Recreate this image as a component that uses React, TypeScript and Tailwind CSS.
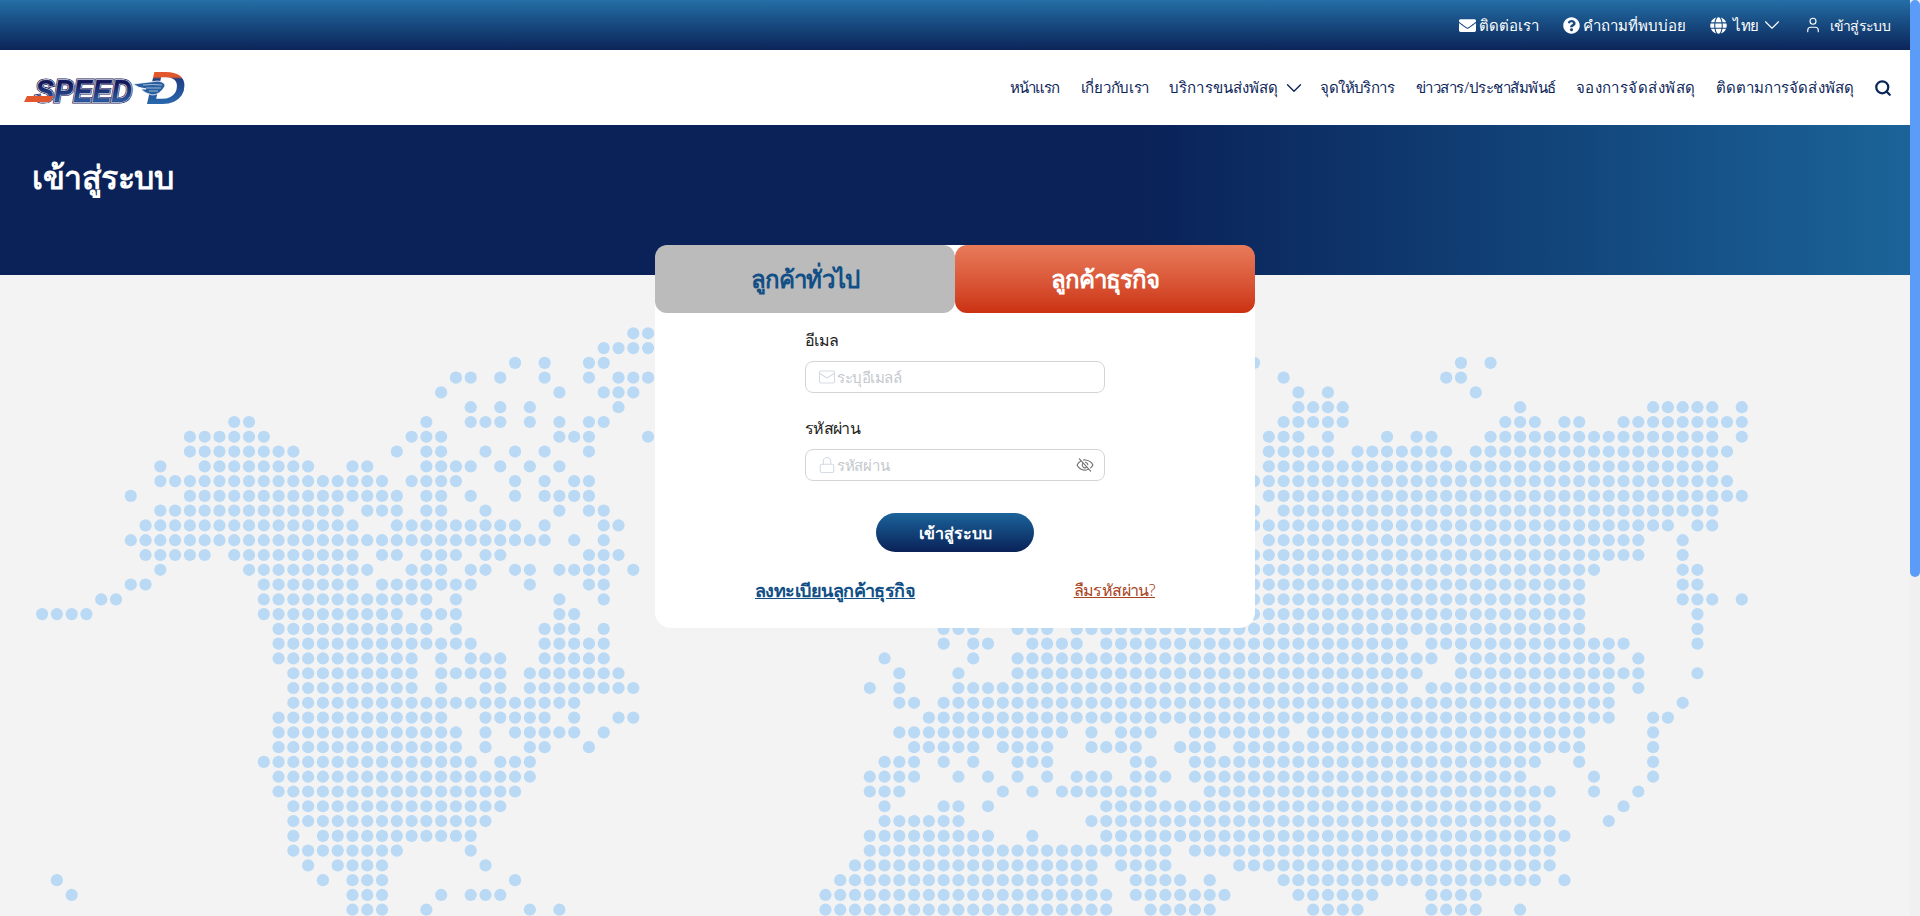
import { ChevronDown, Lock, Mail, Search, User } from "lucide-react";
import { FaEnvelope, FaGlobe, FaQuestionCircle } from "react-icons/fa";
import { PiEyeSlash } from "react-icons/pi";

// dot map: one entry per row, columns as runs
const MAP_ROWS = [
  "40,41",
  "38-41",
  "32,34,37,38,82,96,98",
  "28,29,31,34,37,39-41,84,95,96",
  "27,35,38-40,85,87,97",
  "29,31,33,39,85-88,100,109-113,115",
  "13,14,26,29-31,33,35,37,38,84-88,99-101,103,104,107-115",
  "10-15,25-27,35-37,41,83-85,87,91,93,94,98-113,115",
  "10-17,24,26,27,30,32,34,37,83-87,89-95,97-114",
  "8,11-18,21,22,26-29,31,33,35,83-113",
  "8-23,25-28,32,34,36,37,82-114",
  "6,10-24,26,27,29,32,34-37,83-115",
  "8-20,22-24,26,27,30,35,37,38,82,84-113",
  "7-21,24-32,34,38,39,82-110,112,113",
  "6-34,36,38,83-108,111",
  "7-11,13-21,23,24,26-28,30,31,37-39,82-108,111",
  "8,14-22,25-27,29,30,32,33,35-38,40,82-105,111,112",
  "6,7,15-21,23-29,33,37,38,82-104,111,112",
  "4,5,15-26,28,35,38,82-104,111-113,115",
  "0-3,15-24,26-28,35,36,82-104,112",
  "16-26,28,34-36,38,61-63,66-68,70-104,112",
  "16-29,34-38,61,63,64,67-70,72-92,94-107,112",
  "16-25,27,29-31,34-38,57,63,66-94,96-106,108",
  "17-25,27-31,33-39,58,62,66-93,96-108,112",
  "17-25,27,30,31,33-40,56,58,62-92,94-106,108",
  "17-36,58,59,61-106,111",
  "16-27,30-34,36,39,40,60-106,109,110",
  "16-28,30,32-36,38,58-69,71,73-75,78-84,86-104,109",
  "16-28,30,33,34,37,59-63,65-68,71-74,77-79,81-104,109",
  "15-29,31-33,57-59,61,63,66-68,74,75,78-101,104,109",
  "16-33,56-59,62,64,66,68,70-72,74-76,78-100,105,109",
  "16-32,56-58,65,67,69-75,79-102,105,108",
  "17-31,57,61,62,64,72-101,107",
  "17-30,57-62,71-102,106",
  "17,19-29,56-64,67,72-103",
  "17-24,29,56-76,78-102",
  "18,20-23,30,55-71,73-76,81-102",
  "1,19,21-23,32,54-71,74-77,79,84-101,103",
  "2,21-23,27,29-31,53-72,74-80,85-90,94-97",
  "21-23,26,33,35,53-72,75-79,86-89,94-97,100",
];

const dots = MAP_ROWS.flatMap((row, r) =>
  row.split(",").flatMap((run) => {
    const [from, to] = run.split("-").map(Number);
    const cols: number[] = [];
    for (let c = from; c <= (to ?? from); c++) cols.push(c);
    return cols.map((c) => ({ x: 42.1 + c * 14.78, y: 58.3 + r * 14.78 }));
  })
);

function Logo() {
  const word = {
    x: 11,
    y: 33,
    fontFamily: "Liberation Sans",
    fontWeight: 700,
    fontStyle: "italic",
    fontSize: 32,
    textLength: 97,
    lengthAdjust: "spacingAndGlyphs" as const,
  };
  return (
    <svg width="170" height="58" viewBox="0 -10 170 58" className="block">
      <defs>
        <linearGradient id="speed" x1="0" y1="0" x2="0" y2="1">
          <stop offset="0.3" stopColor="#15195a" />
          <stop offset="0.8" stopColor="#2a5fa8" />
        </linearGradient>
        <linearGradient id="dee" x1="0" y1="0" x2="0" y2="1">
          <stop offset="0.3" stopColor="#e2582c" />
          <stop offset="0.34" stopColor="#1f3f86" />
          <stop offset="0.85" stopColor="#2a6cb0" />
        </linearGradient>
      </defs>
      <text {...word} stroke="#23235e" strokeWidth="3.2" fill="#23235e">SPEED</text>
      <text {...word} stroke="#fff" strokeWidth="1.5" fill="#fff">SPEED</text>
      <text {...word} stroke="#1b2a6e" strokeWidth="0.5" fill="url(#speed)">SPEED</text>
      <path d="M0 33 L3 27 H29 L26 33 Z" fill="#e2582c" />
      <text x="122" y="35" fontFamily="Liberation Sans" fontWeight="700" fontStyle="italic" fontSize="47" fill="url(#dee)" textLength="40" lengthAdjust="spacingAndGlyphs">D</text>
      <path d="M109 15 L134 12 Q141 13 141 17 Q136 26 128 26 Q120 24 117 20 H122 Q114 19 109 15 Z" fill="#2a5f9e" stroke="#fff" strokeWidth="0.8" />
      <path d="M119 16 Q128 15 138 16 M122 19 Q130 19 137 19 M125 22 Q130 22 134 22" stroke="#cfe0f2" strokeWidth="0.7" fill="none" />
    </svg>
  );
}

const NAV = [
  { label: "หน้าแรก", cls: "mr-[2px] tracking-[-1px]" },
  { label: "เกี่ยวกับเรา", cls: "tracking-[-0.3px]" },
  { label: "บริการขนส่งพัสดุ", cls: "tracking-[0.1px]" },
  { label: "จุดให้บริการ", cls: "mr-[2px] tracking-[-0.6px]" },
  { label: "ข่าวสาร/ประชาสัมพันธ์", cls: "tracking-[-0.5px]" },
  { label: "จองการจัดส่งพัสดุ", cls: "tracking-[0.45px]" },
  { label: "ติดตามการจัดส่งพัสดุ", cls: "tracking-[0.1px]" },
];

export default function App() {
  return (
    <div className="flex h-[916px] overflow-hidden font-['Noto_Sans',sans-serif]">
      <div className="flex min-w-0 flex-1 flex-col">
        {/* Top bar */}
        <div className="flex h-[50px] shrink-0 items-center justify-end bg-gradient-to-b from-[#246fa6] to-[#0c2559] pr-5 text-[15px] font-light text-white">
          <div className="flex items-center gap-[3px]">
            <FaEnvelope className="text-[17px]" />
            <span>ติดต่อเรา</span>
          </div>
          <div className="ml-6 flex items-center gap-[3px]">
            <FaQuestionCircle className="text-[17px]" />
            <span>คำถามที่พบบ่อย</span>
          </div>
          <div className="ml-6 flex items-center">
            <FaGlobe className="text-[17px]" />
            <span className="ml-[6px] tracking-[-0.5px]">ไทย</span>
            <ChevronDown className="-mr-[7px] h-[26px] w-[26px]" strokeWidth={1} />
          </div>
          <div className="ml-[26px] flex items-center gap-2">
            <User className="h-[18px] w-[18px]" strokeWidth={1.5} />
            <span className="text-[14px] tracking-[-0.7px]">เข้าสู่ระบบ</span>
          </div>
        </div>

        {/* Nav */}
        <div className="flex h-[75px] shrink-0 items-center justify-between bg-white pl-6 pr-[18px] text-[15px] font-light text-[#0c2559]">
          <Logo />
          <div className="flex items-center gap-5">
            {NAV.map((item) => (
              <div key={item.label} className="flex items-center gap-[10px]">
                <span className={item.cls}>{item.label}</span>
                {item.label === "บริการขนส่งพัสดุ" && <ChevronDown className="-mx-[7px] h-[26px] w-[26px]" strokeWidth={1.25} />}
              </div>
            ))}
            <Search className="h-[18px] w-[18px]" strokeWidth={3} />
          </div>
        </div>

        {/* Title */}
        <div className="h-[150px] shrink-0 bg-gradient-to-r from-[#0a2258] from-60% to-[#1b6499] px-8 pt-[29px]">
          <h1 className="text-[32px] font-bold leading-[46px] tracking-[-0.5px] text-white">เข้าสู่ระบบ</h1>
        </div>

        {/* Login */}
        <div className="relative flex-1 bg-[#f3f3f3]">
          <svg className="absolute left-0 top-0" width="1910" height="641" viewBox="0 0 1910 641">
            {dots.map((d, i) => (
              <circle key={i} cx={d.x} cy={d.y} r="6.1" fill="#b9d9f5" />
            ))}
          </svg>

          <div className="relative z-10 mx-auto -mt-[30px] w-[600px] rounded-2xl bg-white">
            <div className="grid h-[68px] grid-cols-2 text-2xl font-bold tracking-[-0.9px]">
              <div className="flex items-center justify-center rounded-xl bg-[#bbbbbb] text-[#114f86]">ลูกค้าทั่วไป</div>
              <div className="flex items-center justify-center rounded-xl bg-gradient-to-b from-[#e87b5a] to-[#cb300f] text-white">ลูกค้าธุรกิจ</div>
            </div>

            <div className="mx-auto w-[300px] pt-[15px] text-base font-light text-[#222222]">
              <label className="block leading-6 tracking-[-0.7px]">อีเมล</label>
              <div className="mt-[9px] flex h-8 items-center gap-px rounded-lg border border-[#d4d4d4] pl-3 text-[15px] tracking-[-0.5px] text-[#c4c8ce]">
                <Mail className="h-[18px] w-[18px] text-[#d5dbe3]" strokeWidth={1.5} />
                <span>ระบุอีเมลล์</span>
              </div>

              <label className="mt-[23px] block leading-6 tracking-[-0.7px]">รหัสผ่าน</label>
              <div className="mt-[9px] flex h-8 items-center gap-px rounded-lg border border-[#d4d4d4] pl-3 pr-[10px] text-[15px] tracking-[-0.3px] text-[#c4c8ce]">
                <Lock className="h-[18px] w-[18px] text-[#d5dbe3]" strokeWidth={1.5} />
                <span>รหัสผ่าน</span>
                <PiEyeSlash className="ml-auto text-lg text-[#6f6f6f]" />
              </div>
            </div>

            <button className="mx-auto mt-8 flex h-[39px] w-[158px] items-center justify-center rounded-full bg-gradient-to-b from-[#1c649b] to-[#0a2258] text-base font-bold text-white">
              เข้าสู่ระบบ
            </button>

            <div className="mt-[26px] flex h-6 items-center justify-between px-[100px] leading-6">
              <a className="text-lg font-semibold tracking-[-0.55px] text-[#114f86] underline">ลงทะเบียนลูกค้าธุรกิจ</a>
              <a className="text-base font-light tracking-[-0.6px] text-[#a8431c] underline">ลืมรหัสผ่าน?</a>
            </div>
            <div className="h-[26px]" />
          </div>
        </div>
      </div>

      {/* Scrollbar */}
      <div className="w-[10px] shrink-0 bg-[#f0f0f0]">
        <div className="h-[577px] rounded-full bg-[#5a9cf8]" />
      </div>
    </div>
  );
}
